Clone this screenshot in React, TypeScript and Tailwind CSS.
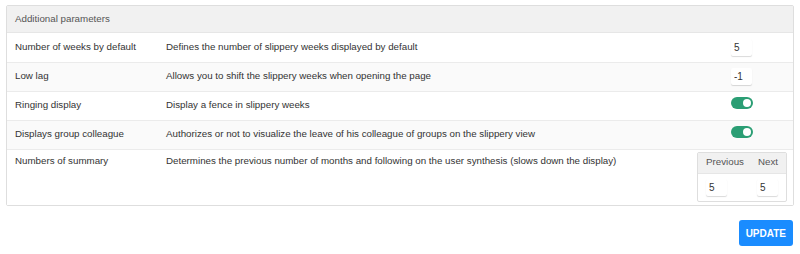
import React, { useState } from 'react';

type Param = {
  label: string;
  description: string;
  kind: 'number' | 'toggle' | 'summary';
  value?: number;
};

const params: Param[] = [
  { label: 'Number of weeks by default', description: 'Defines the number of slippery weeks displayed by default', kind: 'number', value: 5 },
  { label: 'Low lag', description: 'Allows you to shift the slippery weeks when opening the page', kind: 'number', value: -1 },
  { label: 'Ringing display', description: 'Display a fence in slippery weeks', kind: 'toggle' },
  { label: 'Displays group colleague', description: 'Authorizes or not to visualize the leave of his colleague of groups on the slippery view', kind: 'toggle' },
  { label: 'Numbers of summary', description: 'Determines the previous number of months and following on the user synthesis (slows down the display)', kind: 'summary' },
];

// Small number field with the underline look
const NumberField = ({ value }: { value: number }) => (
  <input
    type="text"
    defaultValue={value}
    className="w-[21px] h-[17px] px-[3px] text-[10px] text-[#333] bg-white rounded-[2px] shadow-[0_1px_1px_rgba(0,0,0,0.15)] outline-none"
  />
);

const Toggle = () => {
  const [on, setOn] = useState(true);
  return (
    <button
      type="button"
      onClick={() => setOn(!on)}
      className={`relative inline-flex items-center w-[22px] h-[12px] rounded-full ${on ? 'bg-[#2b9e74]' : 'bg-gray-300'}`}
    >
      <span
        className={`absolute top-[2px] w-[8px] h-[8px] rounded-full bg-white ${on ? 'left-[12px]' : 'left-[2px]'}`}
      />
    </button>
  );
};

export default function App() {
  return (
    <div className="w-[800px] h-[254px] bg-white font-['Liberation_Sans',Arial,sans-serif] text-[9.75px] text-[#333]">
      <div className="pt-[5px] px-[6px]">
        <div className="border border-[#dedede] rounded-[2px]">
          <div className="h-[27px] flex items-center px-[8px] bg-[#f1f1f1] text-[#555] border-b border-[#e6e6e6]">
            Additional parameters
          </div>
          <table className="w-full table-fixed border-collapse">
            <colgroup>
              <col className="w-[159px]" />
              <col />
              <col className="w-[100px]" />
            </colgroup>
            <tbody>
              {params.map((p, i) => (
                <tr
                  key={p.label}
                  className={`${i % 2 === 1 ? 'bg-[#fafafa]' : 'bg-white'} ${i < params.length - 1 ? 'border-b border-[#ebebeb]' : ''}`}
                >
                  {p.kind === 'summary' ? (
                    <>
                      <td className="pl-[8px] pt-[4px] align-top h-[56px]">{p.label}</td>
                      <td className="align-top pt-[4px] whitespace-nowrap">{p.description}</td>
                      <td className="align-top pt-[2px] pr-[6px]">
                        <div className="ml-auto w-[90px] border border-[#dedede] rounded-[2px] bg-white">
                          <div className="h-[21px] flex items-center justify-between px-[8px] bg-[#f1f1f1] text-[#555] border-b border-[#e6e6e6]">
                            <span>Previous</span>
                            <span>Next</span>
                          </div>
                          <div className="h-[27px] flex items-center justify-between px-[8px]">
                            <NumberField value={5} />
                            <NumberField value={5} />
                          </div>
                        </div>
                      </td>
                    </>
                  ) : (
                    <>
                      <td className="pl-[8px] h-[29px]">{p.label}</td>
                      <td>{p.description}</td>
                      <td className="pl-[38px]">
                        {p.kind === 'number' ? <NumberField value={p.value ?? 0} /> : <Toggle />}
                      </td>
                    </>
                  )}
                </tr>
              ))}
            </tbody>
          </table>
        </div>
      </div>
      <div className="flex justify-end pr-[7px] mt-[14px]">
        <button
          type="button"
          className="h-[26px] px-[7px] rounded-[3px] bg-[#1a8cff] text-white text-[10px] font-bold uppercase"
        >
          Update
        </button>
      </div>
    </div>
  );
}
